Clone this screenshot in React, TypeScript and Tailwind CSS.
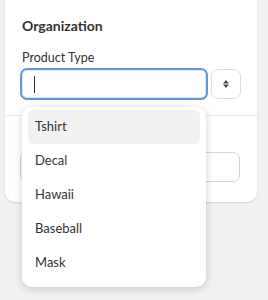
const items = ['Tshirt', 'Decal', 'Hawaii', 'Baseball', 'Mask']

const App = () => {
  return (
    <div
      className="w-[268px] h-[300px] bg-[#f1f1f2] pl-[5px] pr-[11px] text-[#333333]"
      style={{ fontFamily: 'Lato, "Noto Sans", sans-serif' }}
    >
      <div className="relative bg-white rounded-b-[10px] shadow-[0_1px_2px_rgba(0,0,0,0.12)]">
        <div className="px-[15px] pt-[17px] pb-[15px]">
          <h2 className="pl-[2px] text-[14px] font-bold leading-[18px]">Organization</h2>
          <label className="block pl-[2px] mt-[15px] text-[12.5px] leading-[16px]">Product Type</label>
          <div className="mt-[2px] flex gap-[3px]">
            <div className="relative h-[32px] w-[188px] rounded-[7px] border-2 border-[#6b93dc] bg-white shadow-[inset_0_0_0_1px_#dce6f7]">
              <span className="absolute left-[12px] top-[6px] h-[17px] w-px bg-[#303030]" />
            </div>
            <button className="h-[30px] w-[30px] mt-px flex items-center justify-center rounded-[7px] border border-[#dcdcdc] bg-white">
              <svg width="10" height="12" viewBox="0 0 10 12">
                <path d="M5 2 L8 5.5 H2 Z" fill="#4a4a4a" />
                <path d="M5 10 L8 6.5 H2 Z" fill="#4a4a4a" />
              </svg>
            </button>
          </div>
        </div>
        <div className="border-t border-[#ebebeb] px-[15px] pt-[36px] pb-[20px]">
          <div className="h-[30px] w-[220px] rounded-[7px] border border-[#d4d4d4] bg-white" />
        </div>

        <ul className="absolute left-[17px] top-[107px] w-[184px] rounded-[10px] bg-white px-[6px] pt-[3px] pb-[7px] shadow-[0_2px_8px_rgba(0,0,0,0.18)]">
          {items.map((item, i) => (
            <li
              key={item}
              className={`h-[34px] flex items-center rounded-[6px] px-[7px] text-[13px] ${i === 0 ? 'bg-[#f1f1f1]' : ''}`}
            >
              {item}
            </li>
          ))}
        </ul>
      </div>
    </div>
  )
}

export default App
